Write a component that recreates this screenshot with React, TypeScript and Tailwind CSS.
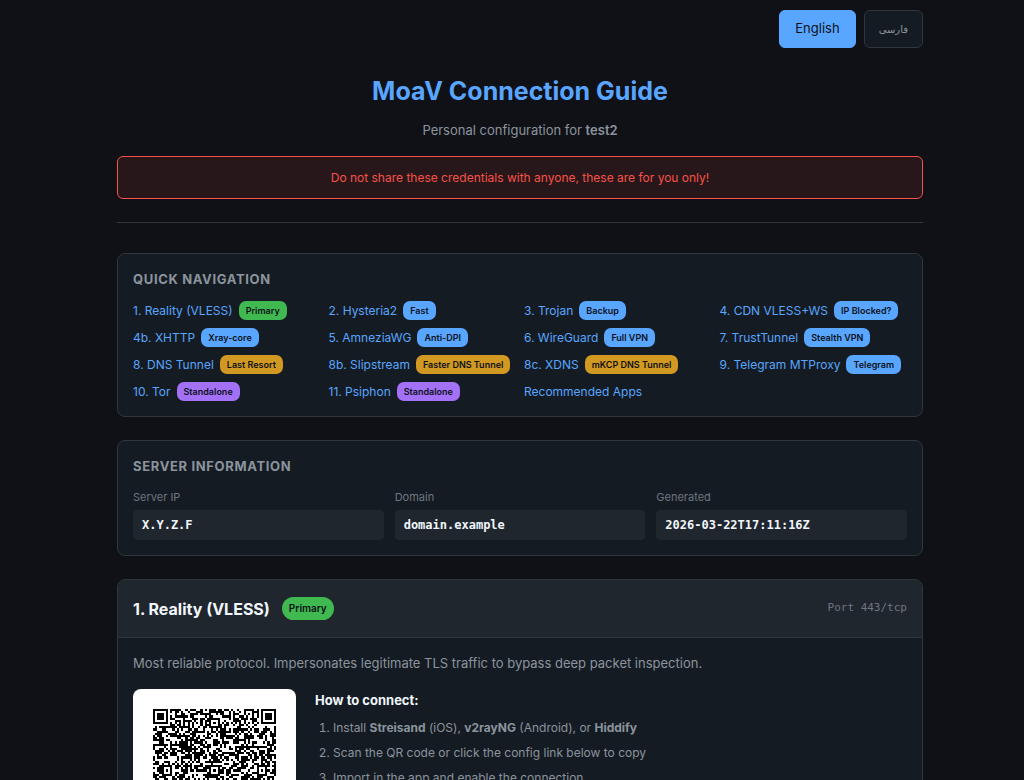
import { clsx } from 'clsx'
import type { ReactNode } from 'react'

type Tone = 'green' | 'blue' | 'orange' | 'purple'

const toneClasses: Record<Tone, string> = {
  green: 'bg-[#3fb950]',
  blue: 'bg-[#58a6ff]',
  orange: 'bg-[#d29922]',
  purple: 'bg-[#a371f7]',
}

const navItems: { label: string; badge?: string; tone?: Tone }[] = [
  { label: '1. Reality (VLESS)', badge: 'Primary', tone: 'green' },
  { label: '2. Hysteria2', badge: 'Fast', tone: 'blue' },
  { label: '3. Trojan', badge: 'Backup', tone: 'blue' },
  { label: '4. CDN VLESS+WS', badge: 'IP Blocked?', tone: 'blue' },
  { label: '4b. XHTTP', badge: 'Xray-core', tone: 'blue' },
  { label: '5. AmneziaWG', badge: 'Anti-DPI', tone: 'blue' },
  { label: '6. WireGuard', badge: 'Full VPN', tone: 'blue' },
  { label: '7. TrustTunnel', badge: 'Stealth VPN', tone: 'blue' },
  { label: '8. DNS Tunnel', badge: 'Last Resort', tone: 'orange' },
  { label: '8b. Slipstream', badge: 'Faster DNS Tunnel', tone: 'orange' },
  { label: '8c. XDNS', badge: 'mKCP DNS Tunnel', tone: 'orange' },
  { label: '9. Telegram MTProxy', badge: 'Telegram', tone: 'blue' },
  { label: '10. Tor', badge: 'Standalone', tone: 'purple' },
  { label: '11. Psiphon', badge: 'Standalone', tone: 'purple' },
  { label: 'Recommended Apps' },
]

const serverInfo = [
  { label: 'Server IP', value: 'X.Y.Z.F' },
  { label: 'Domain', value: 'domain.example' },
  { label: 'Generated', value: '2026-03-22T17:11:16Z' },
]

// Version 10 symbol: 57 modules a side
const QR_SIZE = 57
const QR_ALIGN = [6, 28, 50]

function isDark(x: number, y: number, noise: number) {
  const far = QR_SIZE - 7
  for (const [fx, fy] of [[0, 0], [far, 0], [0, far]]) {
    const ring = Math.max(Math.abs(x - fx - 3), Math.abs(y - fy - 3))
    if (ring <= 4) return ring !== 4 && ring !== 2
  }
  for (const ax of QR_ALIGN) {
    for (const ay of QR_ALIGN) {
      const inFinder =
        (ax === 6 && ay === 6) || (ax === 6 && ay === 50) || (ax === 50 && ay === 6)
      const ring = Math.max(Math.abs(x - ax), Math.abs(y - ay))
      if (!inFinder && ring <= 2) return ring !== 1
    }
  }
  if (x === 6) return y % 2 === 0
  if (y === 6) return x % 2 === 0
  return noise > 0.46
}

function buildQrPath() {
  let seed = 20260322
  let d = ''
  for (let y = 0; y < QR_SIZE; y++) {
    for (let x = 0; x < QR_SIZE; x++) {
      seed = (Math.imul(seed, 1664525) + 1013904223) >>> 0
      if (isDark(x, y, seed / 4294967296)) d += `M${x} ${y}h1v1h-1z`
    }
  }
  return d
}

const qrPath = buildQrPath()

function Badge({ tone, large, children }: { tone: Tone; large?: boolean; children: ReactNode }) {
  return (
    <span
      className={clsx(
        'inline-flex shrink-0 items-center rounded-[7px] px-[7px] font-semibold whitespace-nowrap text-[#0d1117]',
        large ? 'h-[23px] rounded-full text-[10px]' : 'h-[19px] text-[9px]',
        toneClasses[tone],
      )}
    >
      {children}
    </span>
  )
}

function Panel({ id, title, children }: { id: string; title: string; children: ReactNode }) {
  return (
    <section
      aria-labelledby={id}
      className="mb-[23px] rounded-lg border border-[#30363d] bg-[#151b22] p-[15px]"
    >
      <h2
        id={id}
        className="mb-3 text-[13px] leading-5 font-bold tracking-wider text-[#8b949e] uppercase"
      >
        {title}
      </h2>
      {children}
    </section>
  )
}

function QrCode() {
  return (
    <div className="w-[163px] shrink-0 rounded-lg bg-white p-5">
      <svg
        viewBox="0 0 57 57"
        className="block w-full"
        role="img"
        aria-label="Reality QR code"
        shapeRendering="crispEdges"
      >
        <path d={qrPath} fill="#000" />
      </svg>
    </div>
  )
}

export default function App() {
  return (
    <div className="min-h-screen bg-[#101116] pl-4 font-['Inter','Liberation_Sans',sans-serif] text-[#f0f6fc] antialiased">
      <div className="mx-auto max-w-[806px] pt-[10px]">
        <div className="flex justify-end gap-2">
          <button
            type="button"
            className="h-[38px] rounded-md border border-[#58a6ff] bg-[#58a6ff] px-[15px] text-[13px] text-[#0d1117]"
          >
            English
          </button>
          <button
            type="button"
            lang="fa"
            className="h-[38px] rounded-md border border-[#30363d] bg-[#151b22] px-[14px] font-['DejaVu_Sans',sans-serif] text-[10px] text-[#8b949e]"
          >
            فارسی
          </button>
        </div>

        <header className="mb-[30px] border-b border-[#30363d] pt-6 pb-[23px] text-center">
          <h1 className="text-[25px] leading-[38px] font-bold text-[#58a6ff]">
            MoaV Connection Guide
          </h1>
          <p className="mt-[10px] text-[13px] leading-5 text-[#8b949e]">
            Personal configuration for <strong className="font-semibold">test2</strong>
          </p>
          <div
            role="alert"
            className="mt-4 rounded-md border border-[#f85149] bg-[#f85149]/10 py-[11px] text-[12px] leading-[19px] text-[#f85149]"
          >
            Do not share these credentials with anyone, these are for you only!
          </div>
        </header>

        <Panel id="quick-nav" title="Quick Navigation">
          <nav className="grid grid-cols-4 gap-2" aria-labelledby="quick-nav">
            {navItems.map(({ label, badge, tone }) => (
              <a
                key={label}
                href="#reality"
                className="flex h-[19px] items-center gap-[6px] text-[12px] whitespace-nowrap text-[#58a6ff]"
              >
                {label}
                {badge && tone ? <Badge tone={tone}>{badge}</Badge> : null}
              </a>
            ))}
          </nav>
        </Panel>

        <Panel id="server-info" title="Server Information">
          <dl className="grid grid-cols-3 gap-[11px]">
            {serverInfo.map(({ label, value }) => (
              <div key={label}>
                <dt className="mb-1 text-[11px] leading-[18px] text-[#6e7681]">{label}</dt>
                <dd className="rounded bg-[#20262d] px-[9px] py-[5px] font-['DejaVu_Sans_Mono',monospace] text-[12px] leading-5 font-semibold">
                  {value}
                </dd>
              </div>
            ))}
          </dl>
        </Panel>

        <section
          id="reality"
          className="mb-[23px] overflow-hidden rounded-lg border border-[#30363d] bg-[#151b22]"
        >
          <div className="flex h-[58px] items-center justify-between border-b border-[#30363d] bg-[#20262d] px-[15px]">
            <div className="flex items-center gap-3">
              <h2 className="text-[16px] font-bold">1. Reality (VLESS)</h2>
              <Badge tone="green" large>
                Primary
              </Badge>
            </div>
            <span className="font-['DejaVu_Sans_Mono',monospace] text-[11px] text-[#6e7681]">
              Port 443/tcp
            </span>
          </div>
          <div className="p-[15px]">
            <p className="mb-4 text-[13px] leading-5 text-[#8b949e]">
              Most reliable protocol. Impersonates legitimate TLS traffic to bypass deep packet
              inspection.
            </p>
            <div className="flex gap-[19px]">
              <QrCode />
              <div className="flex-1">
                <h3 className="mb-[7px] text-[13px] leading-[22px] font-bold">
                  How to connect:
                </h3>
                <ol className="list-decimal space-y-[5px] pl-[18px] text-[12px] leading-5 text-[#8b949e]">
                  <li>
                    Install <strong className="font-bold">Streisand</strong> (iOS),{' '}
                    <strong className="font-bold">v2rayNG</strong> (Android), or{' '}
                    <strong className="font-bold">Hiddify</strong>
                  </li>
                  <li>Scan the QR code or click the config link below to copy</li>
                  <li>Import in the app and enable the connection</li>
                </ol>
              </div>
            </div>
          </div>
        </section>
      </div>
    </div>
  )
}
